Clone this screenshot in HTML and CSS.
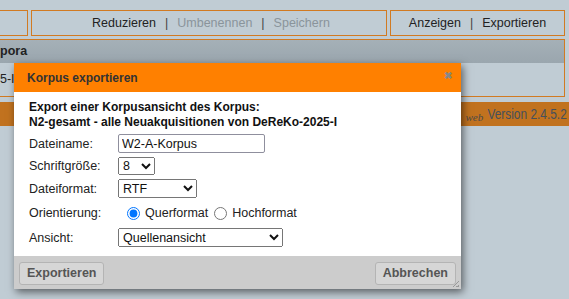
FILE: index.html
```html
<!DOCTYPE html>
<html lang="de">
<head>
<meta charset="utf-8">
<link rel="stylesheet" href="styles.css">
</head>
<body>
<div class="page">
  <div class="toolbar">
    <div class="tbox tbox-left"></div>
    <div class="tbox tbox-mid">
      <span class="act">Reduzieren</span><span class="sep">|</span><span class="dis">Umbenennen</span><span class="sep">|</span><span class="dis">Speichern</span>
    </div>
    <div class="tbox tbox-right">
      <span class="act">Anzeigen</span><span class="sep">|</span><span class="act">Exportieren</span>
    </div>
  </div>
  <div class="panel">
    <div class="panel-head">pora</div>
    <div class="panel-row">5-I</div>
  </div>
  <div class="verbar"><span class="web">web</span><span class="ver">Version 2.4.5.2</span></div>
</div>

<div class="dialog">
  <div class="dlg-title"><span>Korpus exportieren</span><span class="close">✖</span></div>
  <div class="dlg-body">
    <div class="intro">Export einer Korpusansicht des Korpus:<br>N2-gesamt - alle Neuakquisitionen von DeReKo-2025-I</div>
    <div class="form">
      <label class="lbl">Dateiname:</label>
      <div class="fld"><input class="txt" type="text" value="W2-A-Korpus"></div>
      <label class="lbl">Schriftgröße:</label>
      <div class="fld"><select class="sel sel-size"><option>8</option></select></div>
      <label class="lbl">Dateiformat:</label>
      <div class="fld"><select class="sel sel-fmt"><option>RTF</option></select></div>
      <label class="lbl">Orientierung:</label>
      <div class="fld fld-or">
        <label class="radio"><input type="radio" name="o" checked> Querformat</label>
        <label class="radio"><input type="radio" name="o"> Hochformat</label>
      </div>
      <label class="lbl">Ansicht:</label>
      <div class="fld"><select class="sel sel-view"><option>Quellenansicht</option></select></div>
    </div>
  </div>
  <div class="dlg-foot">
    <button class="btn">Exportieren</button>
    <button class="btn">Abbrechen</button>
    <span class="grip"></span>
  </div>
</div>
</body>
</html>
```
FILE: styles.css
```css
html, body {
  margin: 0;
  padding: 0;
}
body {
  background: #c0ccd4;
  font-family: "Liberation Sans", Arial, sans-serif;
  font-size: 12px;
  color: #222;
  width: 569px;
  height: 299px;
  overflow: hidden;
  position: relative;
}
.page {
  padding-top: 10px;
}
.toolbar {
  display: flex;
  gap: 3px;
  height: 26px;
  padding-right: 4px;
}
.tbox {
  border: 1px solid #d17a22;
  box-sizing: border-box;
  height: 26px;
  display: flex;
  align-items: center;
  justify-content: center;
  color: #222;
  font-size: 12.5px;
}
.tbox-left {
  width: 28px;
  border-left: none;
}
.tbox-mid {
  width: 356px;
  padding-left: 4px;
}
.tbox-right {
  flex: 1;
}
.sep {
  margin: 0 9px;
  color: #444;
}
.dis {
  color: #8a949b;
}
.panel {
  margin-top: 3px;
  margin-right: 4px;
  border: 1px solid #d17a22;
  border-left: none;
  height: 58px;
  box-sizing: border-box;
}
.panel-head {
  height: 23px;
  background: linear-gradient(#a5b0b7, #9aa6ae);
  font-weight: bold;
  font-size: 12.5px;
  line-height: 23px;
  color: #222;
}
.panel-row {
  height: 33px;
  line-height: 33px;
  font-size: 12.5px;
  color: #222;
}
.verbar {
  margin-top: 5px;
  height: 24px;
  background: #c1721f;
  display: flex;
  justify-content: flex-end;
  align-items: center;
  padding-right: 2px;
}
.web {
  font-family: "Liberation Serif", "Times New Roman", serif;
  font-style: italic;
  font-size: 11px;
  color: #4a4a4a;
  margin-top: 5px;
}
.ver {
  display: inline-block;
  font-size: 14.5px;
  color: #45505c;
  transform: scaleX(0.82);
  transform-origin: right center;
  margin-left: -13px;
}
.dialog {
  position: absolute;
  left: 14px;
  top: 63px;
  width: 447px;
  height: 226px;
  background: #fff;
  box-shadow: 2px 3px 8px rgba(0, 0, 0, 0.55);
  display: flex;
  flex-direction: column;
}
.dlg-title {
  height: 29px;
  background: #ff8000;
  display: flex;
  justify-content: space-between;
  align-items: center;
  padding: 0 9px 0 13px;
  font-weight: bold;
  color: #333;
  font-size: 12px;
}
.close {
  color: #888;
  font-size: 10px;
  margin-top: -4px;
}
.dlg-body {
  flex: 1;
  padding: 8px 15px 0 15px;
}
.intro {
  font-weight: bold;
  font-size: 12px;
  line-height: 15px;
  color: #111;
}
.form {
  display: grid;
  grid-template-columns: 89px 1fr;
  row-gap: 4px;
  margin-top: 4px;
  align-items: center;
  font-size: 12.5px;
}
.lbl {
  color: #222;
}
.fld {
  display: flex;
  align-items: center;
}
.txt {
  width: 147px;
  height: 19px;
  box-sizing: border-box;
  border: 1px solid #8f8f9d;
  border-radius: 2px;
  font-family: "Liberation Sans", Arial, sans-serif;
  font-size: 12.5px;
  padding: 0 3px;
  margin: 0;
  color: #111;
}
.sel {
  height: 18px;
  box-sizing: border-box;
  font-family: "Liberation Sans", Arial, sans-serif;
  font-size: 12.5px;
  margin: 0;
  color: #111;
}
.sel-size { width: 37px; }
.sel-fmt { width: 79px; height: 19px; }
.sel-view { width: 165px; height: 19px; }
.fld-or {
  height: 20px;
  margin-top: 1px;
  margin-bottom: 1px;
  padding-left: 6px;
}
.radio {
  display: flex;
  align-items: center;
  margin-right: 3px;
  color: #222;
}
.radio input {
  margin: 0 5px 0 3px;
  width: 13px;
  height: 13px;
}
.dlg-foot {
  height: 33px;
  background: #cccccc;
  display: flex;
  justify-content: space-between;
  align-items: center;
  padding: 0 5px;
  position: relative;
}
.btn {
  height: 23px;
  padding: 0 7px;
  border: 1px solid #b4b4b4;
  border-radius: 3px;
  background: #d6d6d6;
  font-family: "Liberation Sans", Arial, sans-serif;
  font-size: 12.5px;
  font-weight: bold;
  color: #555;
  margin-top: 1px;
}
.grip {
  position: absolute;
  right: 2px;
  bottom: 2px;
  width: 6px;
  height: 6px;
  background: linear-gradient(135deg, transparent 45%, #999 45%, #999 55%, transparent 55%, transparent 75%, #999 75%);
}
```
